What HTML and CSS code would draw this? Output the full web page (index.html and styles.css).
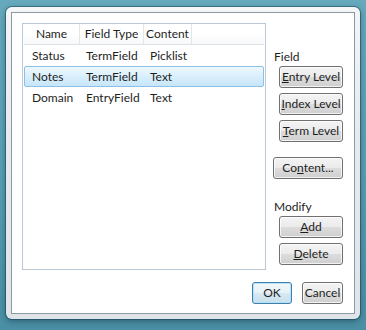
FILE: index.html
```html
<!DOCTYPE html>
<html>
<head>
<meta charset="utf-8">
<link rel="stylesheet" href="styles.css">
</head>
<body>
<div class="window">
  <div class="client">
    <div class="main">
      <div class="listview">
        <div class="header">
          <div class="hcell c1">Name</div>
          <div class="hcell c2">Field Type</div>
          <div class="hcell c3">Content</div>
          <div class="hfill"></div>
        </div>
        <div class="row">
          <div class="cell c1">Status</div>
          <div class="cell c2">TermField</div>
          <div class="cell c3">Picklist</div>
        </div>
        <div class="row selected">
          <div class="cell c1">Notes</div>
          <div class="cell c2">TermField</div>
          <div class="cell c3">Text</div>
        </div>
        <div class="row">
          <div class="cell c1">Domain</div>
          <div class="cell c2">EntryField</div>
          <div class="cell c3">Text</div>
        </div>
      </div>
      <div class="side">
        <div class="label label-field">Field</div>
        <button class="btn btn-level"><u>E</u>ntry Level</button>
        <button class="btn btn-level btn-gap"><u>I</u>ndex Level</button>
        <button class="btn btn-level btn-gap"><u>T</u>erm Level</button>
        <button class="btn btn-content">Co<u>n</u>tent...</button>
        <div class="label label-modify">Modify</div>
        <button class="btn btn-level"><u>A</u>dd</button>
        <button class="btn btn-level btn-gap"><u>D</u>elete</button>
      </div>
    </div>
    <div class="footer">
      <button class="btn btn-ok">OK</button>
      <button class="btn btn-cancel">Cancel</button>
    </div>
  </div>
</div>
</body>
</html>
```

FILE: styles.css
```css
html, body {
  margin: 0;
  padding: 0;
}
body {
  width: 366px;
  height: 330px;
  overflow: hidden;
  background: linear-gradient(180deg, #66a9bc 0%, #5a9fb3 50%, #4a8fa4 100%);
  font-family: Lato, "Noto Sans", "Liberation Sans", sans-serif;
  font-size: 12px;
  color: #1e1e1e;
  padding-top: 7px;
  padding-left: 6px;
  box-sizing: border-box;
}
.window {
  width: 354px;
  height: 312px;
  box-sizing: border-box;
  padding: 5px;
  border-radius: 6px;
  background: linear-gradient(180deg, #f3f5f7 0%, #e7ebee 40%, #dfe4e8 100%);
  box-shadow: 0 0 0 1px rgba(30, 70, 90, 0.55), 0 2px 6px rgba(0, 30, 50, 0.45);
}
.client {
  width: 100%;
  height: 100%;
  box-sizing: border-box;
  border: 1px solid #8d9aa4;
  background: #fff;
  padding: 10px 10px 0 10px;
  display: flex;
  flex-direction: column;
}
.main {
  display: flex;
  gap: 7px;
}
.listview {
  width: 244px;
  height: 247px;
  box-sizing: border-box;
  border: 1px solid #b9c8d4;
  padding: 0 1px;
}
.header {
  display: flex;
  height: 21px;
  box-sizing: border-box;
  border-bottom: 1px solid #dde2e6;
  background: linear-gradient(180deg, #ffffff 0%, #ffffff 50%, #f7f8f9 100%);
}
.hcell {
  text-align: center;
  line-height: 20px;
  border-right: 1px solid #e3e6e9;
  box-sizing: border-box;
}
.hcell.c1 { width: 56px; }
.hcell.c2 { width: 64px; }
.hcell.c3 { width: 48px; }
.hfill { flex: 1; }
.row {
  display: flex;
  height: 21px;
  line-height: 19px;
  box-sizing: border-box;
  border: 1px solid transparent;
  border-radius: 2px;
}
.row.selected {
  background: linear-gradient(180deg, #eef8fe 0%, #dcf0fc 45%, #c6e6f9 100%);
  border-color: #8fc0e3;
}
.cell { box-sizing: border-box; }
.cell.c1 { width: 55px; padding-left: 7px; }
.cell.c2 { width: 64px; padding-left: 6px; }
.cell.c3 { padding-left: 6px; }
.side {
  width: 70px;
  display: flex;
  flex-direction: column;
  align-items: flex-end;
}
.label {
  align-self: flex-start;
  line-height: 16px;
  padding-left: 1px;
}
.label-field { margin-top: 26px; margin-bottom: 1px; }
.label-modify { margin-top: 20px; margin-bottom: 1px; }
.btn {
  font-family: inherit;
  font-size: 12px;
  color: #1e1e1e;
  height: 22px;
  padding: 0;
  box-sizing: border-box;
  border: 1px solid #707070;
  border-radius: 3px;
  background: linear-gradient(180deg, #f4f4f4 0%, #ebebeb 48%, #dcdcdc 52%, #cfcfcf 100%);
  box-shadow: inset 0 0 0 1px rgba(255, 255, 255, 0.75);
  line-height: 18px;
  text-align: center;
}
.btn u { text-underline-offset: 1px; }
.btn-level { width: 64px; }
.btn-gap { margin-top: 5px; }
.btn-content { width: 70px; margin-top: 15px; }
.footer {
  display: flex;
  justify-content: flex-end;
  gap: 10px;
  margin-top: 12px;
  padding-right: 1px;
}
.btn-ok {
  width: 40px;
  border-color: #3c7fb1;
  background: linear-gradient(180deg, #f2f8fb 0%, #e6f1f7 48%, #d6e8f2 52%, #c9e0ec 100%);
  box-shadow: inset 0 0 0 1px rgba(180, 225, 245, 0.9);
}
.btn-cancel { width: 41px; }
```
